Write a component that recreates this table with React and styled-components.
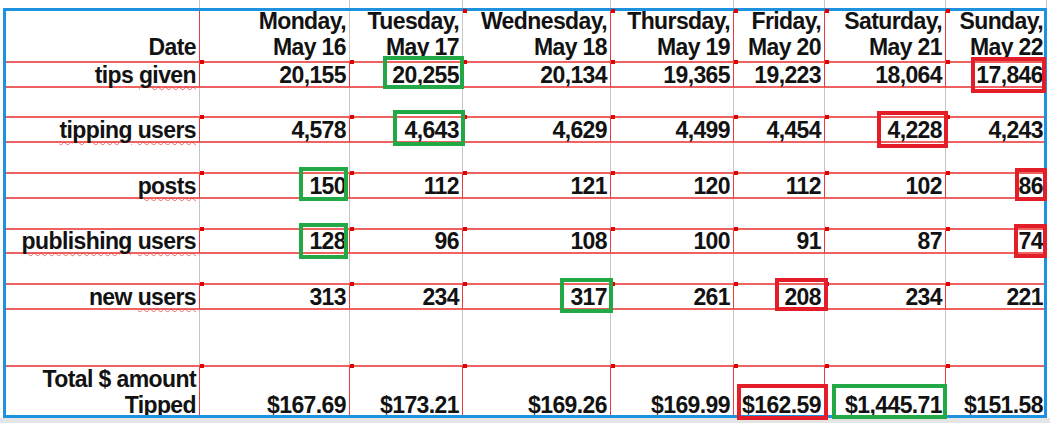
import React from "react";
import styled, { createGlobalStyle, css } from "styled-components";

const GlobalStyle = createGlobalStyle`
  html, body {
    margin: 0;
    padding: 0;
    background: #fff;
  }
  body {
    font-family: "Liberation Sans", Arial, sans-serif;
  }
`;

const Page = styled.div`
  width: 1050px;
  height: 423px;
  overflow: hidden;
  background: #fff;
`;

const Frame = styled.div`
  position: relative;
  margin: 0 3px;
`;

const Sheet = styled.div`
  display: grid;
  grid-template-columns: 197px 150px 113px 148px 123px 91px 121px 101px;
  grid-template-rows: 11px 50px 27px 28px 27px 29px 27px 29px 26px 29px 27px 55px 53px;
  color: #121212;
  font-size: 23px;
  font-weight: 700;
  letter-spacing: -0.6px;
  line-height: 26px;
`;

const redLine = "#e63d3d";
const rowLine = "#ee6262";

const Cell = styled.div`
  position: relative;
  box-sizing: border-box;
  display: flex;
  justify-content: flex-end;
  align-items: ${(p) => (p.$kind === "data" ? "center" : "flex-end")};
  padding-right: 3px;
  text-align: right;
  white-space: nowrap;
  border-right: 1px solid ${(p) => (p.$grey ? "#c6c6c6" : redLine)};

  ${(p) =>
    (p.$kind === "data" || p.$kind === "total") &&
    css`
      border-top: 2px solid ${rowLine};
    `}
  ${(p) =>
    p.$kind === "data" &&
    css`
      border-bottom: 2px solid ${rowLine};
    `}
  ${(p) =>
    p.$note &&
    css`
      &::before {
        content: "";
        position: absolute;
        z-index: 3;
        left: 0;
        top: ${p.$kind === "head" ? "-2px" : "-3px"};
        width: 4px;
        height: 4px;
        background: #e00000;
      }
    `}
`;

const Text = styled.div`
  margin-bottom: ${(p) => (p.$lift ? "1px" : "0")};
`;

const Line = styled.span`
  display: block;
`;

const Spell = styled.span`
  text-decoration: underline wavy rgba(228, 60, 60, 0.75);
  text-decoration-thickness: 1px;
  text-underline-offset: 3px;
`;

const Callout = styled.span`
  position: absolute;
  z-index: 4;
  left: ${(p) => p.$x}px;
  top: ${(p) => p.$y}px;
  width: ${(p) => p.$w}px;
  height: ${(p) => p.$h}px;
  box-sizing: border-box;
  border: 4px solid ${(p) => (p.$tone === "good" ? "#22a845" : "#e31e28")};
  pointer-events: none;
`;

const Selection = styled.div`
  position: absolute;
  z-index: 2;
  left: 0;
  right: 0;
  top: 8px;
  bottom: 0;
  border: 3px solid #1d93df;
  pointer-events: none;
`;

const Footer = styled.div`
  height: 5px;
  background: #e5e5e5;
`;

const days = [
  ["Monday,", "May 16"],
  ["Tuesday,", "May 17"],
  ["Wednesday,", "May 18"],
  ["Thursday,", "May 19"],
  ["Friday,", "May 20"],
  ["Saturday,", "May 21"],
  ["Sunday,", "May 22"],
];

// header columns whose grid line is grey instead of red
const greyHeadLines = [0, 1];

// callouts: column index -> [tone, x, y, w, h] relative to the cell
const metrics = [
  {
    key: "tips",
    label: (
      <>
        tips <Spell>given</Spell>
      </>
    ),
    values: ["20,155", "20,255", "20,134", "19,365", "19,223", "18,064", "17,846"],
    callouts: { 1: ["good", 33, -7, 81, 33], 6: ["bad", 25, -6, 75, 36] },
  },
  {
    key: "tipping",
    label: (
      <>
        <Spell>tipping</Spell> <Spell>users</Spell>
      </>
    ),
    values: ["4,578", "4,643", "4,629", "4,499", "4,454", "4,228", "4,243"],
    callouts: { 1: ["good", 43, -8, 72, 36], 5: ["bad", 52, -7, 71, 37] },
  },
  {
    key: "posts",
    label: <Spell>posts</Spell>,
    values: ["150", "112", "121", "120", "112", "102", "86"],
    callouts: { 0: ["good", 99, -7, 49, 34], 6: ["bad", 69, -6, 32, 33] },
  },
  {
    key: "publishing",
    label: (
      <>
        <Spell>publishing</Spell> <Spell>users</Spell>
      </>
    ),
    values: ["128", "96", "108", "100", "91", "87", "74"],
    callouts: { 0: ["good", 99, -7, 49, 36], 6: ["bad", 68, -6, 33, 34] },
  },
  {
    key: "new",
    label: (
      <>
        new <Spell>users</Spell>
      </>
    ),
    values: ["313", "234", "317", "261", "208", "234", "221"],
    callouts: { 2: ["good", 97, -7, 53, 35], 4: ["bad", 41, -7, 53, 33] },
  },
];

const totals = {
  values: ["$167.69", "$173.21", "$169.26", "$169.99", "$162.59", "$1,445.71", "$151.58"],
  callouts: { 4: ["bad", 3, 17, 91, 36], 5: ["good", 7, 17, 115, 35] },
};

function boxProps([tone, x, y, w, h]) {
  return { $tone: tone, $x: x, $y: y, $w: w, $h: h };
}

export default function App() {
  return (
    <Page>
      <GlobalStyle />
      <Frame>
        <Sheet>
          {/* cut-off row above the selection */}
          {Array.from({ length: 8 }, (_, i) => (
            <Cell key={"prev" + i} $kind="gap" $grey />
          ))}

          <Cell $kind="head">
            <Text $lift>Date</Text>
          </Cell>
          {days.map(([day, date], i) => (
            <Cell key={day} $kind="head" $grey={greyHeadLines.includes(i)} $note={i > 1}>
              <Text $lift>
                <Line>{day}</Line>
                <Line>{date}</Line>
              </Text>
            </Cell>
          ))}

          {metrics.map((m) => (
            <React.Fragment key={m.key}>
              <Cell $kind="data">
                <Text>{m.label}</Text>
              </Cell>
              {m.values.map((v, i) => (
                <Cell key={i} $kind="data" $note>
                  <Text>{v}</Text>
                  {m.callouts[i] && <Callout {...boxProps(m.callouts[i])} />}
                </Cell>
              ))}
              {Array.from({ length: 8 }, (_, i) => (
                <Cell key={"gap" + i} $kind="gap" $grey />
              ))}
            </React.Fragment>
          ))}

          <Cell $kind="total">
            <Text>
              <Line>Total $ amount</Line>
              <Line>Tipped</Line>
            </Text>
          </Cell>
          {totals.values.map((v, i) => (
            <Cell key={"t" + i} $kind="total" $note>
              <Text>{v}</Text>
              {totals.callouts[i] && <Callout {...boxProps(totals.callouts[i])} />}
            </Cell>
          ))}
        </Sheet>
        <Selection />
      </Frame>
      <Footer />
    </Page>
  );
}
